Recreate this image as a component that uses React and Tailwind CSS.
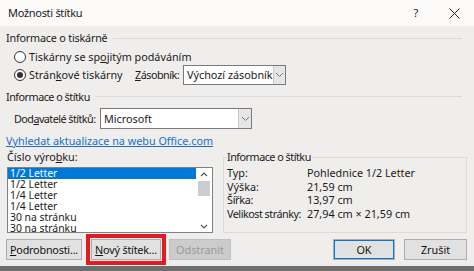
import React from "react";

const font = { fontFamily: '"Segoe UI", "Noto Sans", sans-serif' };

function Radio({ checked }) {
  return (
    <span className="flex h-[12px] w-[12px] shrink-0 items-center justify-center rounded-full border border-[#333] bg-white">
      {checked && <span className="h-[6px] w-[6px] rounded-full bg-[#333]" />}
    </span>
  );
}

function Chevron() {
  return (
    <svg width="9" height="6" viewBox="0 0 9 6">
      <path d="M1 1 L4.5 4.5 L8 1" fill="none" stroke="#777" strokeWidth="1" />
    </svg>
  );
}

function Select({ value, width, height = "h-[20px]" }) {
  return (
    <div className={`flex ${height} ${width} border border-[#7a7a7a] bg-white`}>
      <div className="flex flex-1 items-center whitespace-nowrap pl-[3px]">{value}</div>
      <div className="flex w-[13px] items-center justify-center border-l border-[#c8c8c8] bg-[#e6e6e6]">
        <Chevron />
      </div>
    </div>
  );
}

function Btn({ children, className = "", disabled }) {
  return (
    <div
      className={`flex h-[21px] shrink-0 items-center justify-center whitespace-nowrap border ${
        disabled
          ? "border-[#bfbfbf] bg-[#cccccc] text-[#9a9a9a]"
          : "border-[#adadad] bg-[#e1e1e1] text-[#111]"
      } ${className}`}
    >
      {children}
    </div>
  );
}

const items = ["1/2 Letter", "1/2 Letter", "1/4 Letter", "1/4 Letter", "30 na stránku", "30 na stránku"];

export default function App() {
  return (
    <div
      className="h-[271px] w-[474px] overflow-hidden whitespace-nowrap bg-[#f0eeec] text-[10.8px] leading-[14px] text-[#1a1a1a]"
      style={font}
    >
      {/* TITLE BAR */}
      <div className="flex h-[26px] items-center bg-[#fcfbfa] pl-[8px] text-[11px]">
        <span className="flex-1 tracking-[-0.3px]">Možnosti štítku</span>
        <span className="w-[10px] text-center">?</span>
        <span className="ml-[28px] mr-[14px] flex w-[11px] justify-center">
          <svg width="11" height="11" viewBox="0 0 11 11">
            <path d="M0.5 0.5 L10.5 10.5 M10.5 0.5 L0.5 10.5" stroke="#222" strokeWidth="1" />
          </svg>
        </span>
      </div>

      <div className="px-[6px]">
        {/* PRINTER INFO */}
        <div className="flex h-[24px] items-center">
          <span className="tracking-[-0.2px]">Informace o tiskárně</span>
          <span className="ml-[5px] mr-[6px] h-px flex-1 bg-[#dcdad8]" />
        </div>
        <div className="flex h-[14px] items-center pl-[8px]">
          <Radio />
          <span className="ml-[3px]">Tiskárny se sp<u>o</u>jitým podáváním</span>
        </div>
        <div className="flex h-[21px] items-center pl-[8px]">
          <Radio checked />
          <span className="ml-[3px] w-[106px]">Strán<u>k</u>ové tiskárny</span>
          <span className="w-[48px] tracking-[-0.5px]"><u>Z</u>ásobník:</span>
          <Select value="Výchozí zásobník" width="w-[103px]" />
        </div>

        {/* LABEL INFO */}
        <div className="flex h-[23px] items-center">
          <span className="tracking-[-0.5px]">Informace o štítku</span>
          <span className="ml-[5px] mr-[6px] h-px flex-1 bg-[#dcdad8]" />
        </div>
        <div className="flex h-[21px] items-center pl-[8px]">
          <span className="w-[86px] tracking-[-0.55px]">Dod<u>a</u>vatelé štítků:</span>
          <Select value="Microsoft" width="w-[152px]" height="h-[21px]" />
        </div>
        <div className="mt-[4px] h-[16px] leading-[16px] text-[#1a6fc4] underline">
          Vyhledat aktualizace na webu Office.com
        </div>

        <div className="mt-[1px] flex">
          <div className="ml-[1px] w-[206px]">
            <div>Číslo výro<u>b</u>ku:</div>
            <div className="mt-[3px] flex h-[66px] border border-[#828282] bg-white">
              <div className="flex-1 text-[10.4px]">
                {items.map((t, i) => (
                  <div
                    key={i}
                    className={`h-[11px] pl-[2px] leading-[11px] ${i === 0 ? "bg-[#0078d7] text-white" : ""}`}
                  >
                    {t}
                  </div>
                ))}
              </div>
              <div className="flex w-[16px] flex-col items-center bg-white">
                <div className="flex h-[12px] items-center">
                  <svg width="8" height="5" viewBox="0 0 8 5">
                    <path d="M1 4 L4 1 L7 4" fill="none" stroke="#555" strokeWidth="1.2" />
                  </svg>
                </div>
                <div className="mt-[1px] h-[15px] w-[12px] bg-[#cdcdcd]" />
                <div className="flex-1" />
                <div className="flex h-[12px] items-center">
                  <svg width="8" height="5" viewBox="0 0 8 5">
                    <path d="M1 1 L4 4 L7 1" fill="none" stroke="#555" strokeWidth="1.2" />
                  </svg>
                </div>
              </div>
            </div>
          </div>

          <div className="ml-[10px] mr-[1px] mt-[7px] flex h-[76px] flex-1 flex-col border border-[#dcdad8] px-[3px]">
            <div className="-mt-[8px] w-fit bg-[#f0eeec] pr-[1px] tracking-[-0.5px]">Informace o štítku</div>
            <div className="mt-[2px] grid grid-cols-[80px_1fr] leading-[13.5px]">
              <span>Typ:</span>
              <span>Pohlednice 1/2 Letter</span>
              <span>Výška:</span>
              <span>21,59 cm</span>
              <span className="tracking-[-0.3px]">Šířka:</span>
              <span>13,97 cm</span>
              <span className="tracking-[-0.5px]">Velikost stránky:</span>
              <span>27,94 cm × 21,59 cm</span>
            </div>
          </div>
        </div>

        {/* BUTTONS */}
        <div className="mt-[6px] flex h-[21px] items-center">
          <Btn className="w-[76px]"><span className="tracking-[-0.2px]"><u>P</u>odrobnosti...</span></Btn>
          <div className="ml-[4px] shrink-0 border-[4px] border-[#e01b24] p-[1px]">
            <Btn className="w-[70px]"><span className="tracking-[-0.2px]"><u>N</u>ový štítek...</span></Btn>
          </div>
          <Btn disabled className="ml-[3px] w-[62px]">Odstranit</Btn>
          <span className="flex-1" />
          <Btn className="w-[62px] border-[#0078d7] shadow-[inset_0_0_0_1px_#0078d7]">OK</Btn>
          <Btn className="ml-[9px] mr-[1px] w-[63px]">Zrušit</Btn>
        </div>
      </div>
      <div className="mt-[6px] h-[6px] bg-[#6e6e6e]" />
    </div>
  );
}
